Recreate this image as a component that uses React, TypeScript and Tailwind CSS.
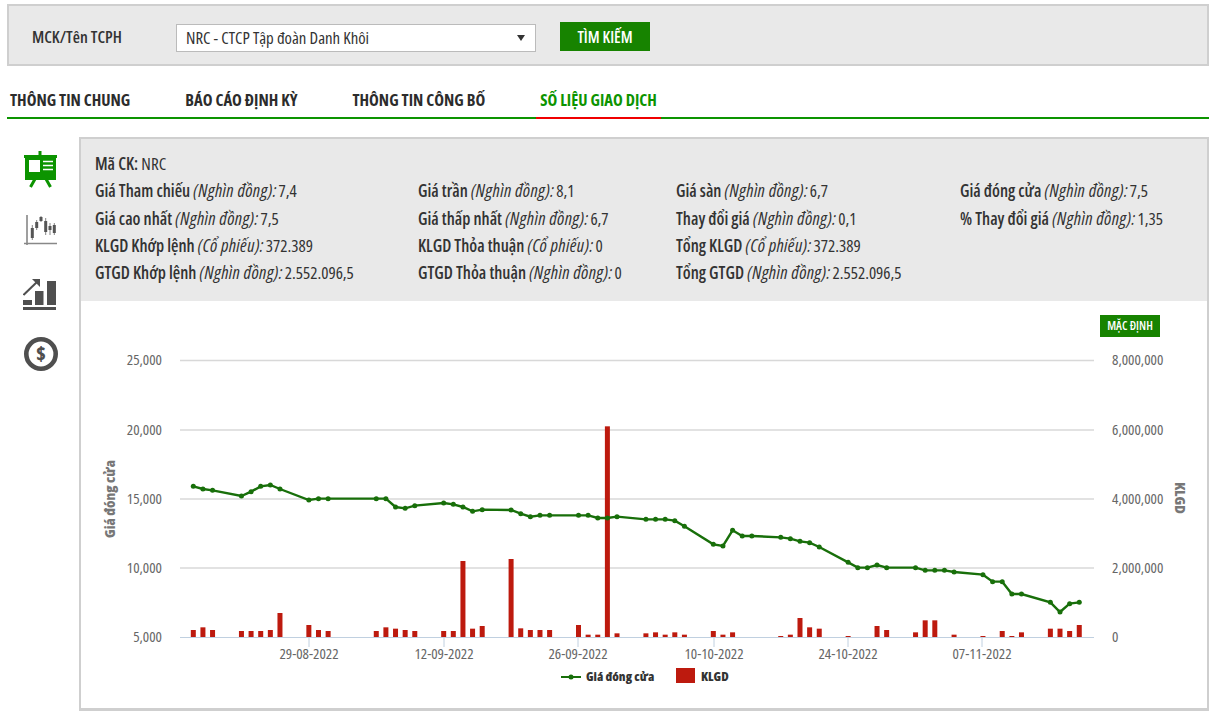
const pts: [number, number][] = [
  [0,79],[1,87],[2,91],[5,108],[6,95],[7,79],[8,75],[9,87],[12,120],[13,116],[14,116],[19,116],[20,116],[21,141],[22,145],[23,137],[26,129],[27,133],[28,141],[29,154],[30,149],
  [33,150],[34,161],[35,170],[36,166],[37,166],[40,166],[41,166],[42,174],[43,174],[44,170],[47,178],[48,178],[49,178],[50,182],[51,199],[54,253],[55,258],[56,211],[57,228],[58,228],[61,232],[62,236],[63,244],[64,248],[65,261],[68,307],
  [69,323],[70,323],[71,315],[72,323],[75,323],[76,331],[77,331],[78,331],[79,336],[82,344],[83,365],[84,365],[85,402],[86,402],[89,427],[90,456],[91,431],[92,427],
];
const bars: [number, number][] = [
  [0,510],[1,502],[2,510],[5,513],[6,513],[7,513],[8,510],[9,459],[12,495],[13,510],[14,513],[19,513],[20,502],[21,506],[22,510],[23,513],[26,513],[27,513],[28,303],[29,506],[30,498],
  [33,297],[34,505],[35,510],[36,510],[37,510],[40,495],[41,524],[42,524],[43,-101],[44,520],[47,520],[48,517],[49,524],[50,517],[51,524],[54,513],[55,524],[56,517],[61,528],[62,524],[63,474],[64,502],[65,506],[68,528],
  [71,498],[72,510],[75,517],[76,481],[77,481],[79,524],[82,528],[84,513],[85,528],[86,517],[89,506],[90,506],[91,513],[92,495],
];
const X = (i: number) => 193.3 + 9.63 * i;
const Y = (z: number) => 460 + z / 3;
const grid = [360.5, 430, 499, 568];
const left = [["25,000", 360], ["20,000", 430], ["15,000", 499], ["10,000", 568], ["5,000", 637]] as const;
const right = [["8,000,000", 360], ["6,000,000", 430], ["4,000,000", 499], ["2,000,000", 568], ["0", 637]] as const;
const dates = [["29-08-2022", 309], ["12-09-2022", 444], ["26-09-2022", 578], ["10-10-2022", 714], ["24-10-2022", 848], ["07-11-2022", 982]] as const;

type Cell = [string, string, string];
const P = "(Nghìn đồng):";
const C = "(Cổ phiếu):";
const E: Cell = ["", "", ""];
const rows: Cell[][] = [
  [["Giá Tham chiếu", P, "7,4"], ["Giá trần", P, "8,1"], ["Giá sàn", P, "6,7"], ["Giá đóng cửa", P, "7,5"]],
  [["Giá cao nhất", P, "7,5"], ["Giá thấp nhất", P, "6,7"], ["Thay đổi giá", P, "0,1"], ["% Thay đổi giá", P, "1,35"]],
  [["KLGD Khớp lệnh", C, "372.389"], ["KLGD Thỏa thuận", C, "0"], ["Tổng KLGD", C, "372.389"], E],
  [["GTGD Khớp lệnh", P, "2.552.096,5"], ["GTGD Thỏa thuận", P, "0"], ["Tổng GTGD", P, "2.552.096,5"], E],
];
const tabs = ["THÔNG TIN CHUNG", "BÁO CÁO ĐỊNH KỲ", "THÔNG TIN CÔNG BỐ", "SỐ LIỆU GIAO DỊCH"];

function BoardIcon() {
  return (
    <svg width="36" height="38" viewBox="0 0 36 38" fill="none">
      <rect x="2" y="5" width="31" height="24" fill="#0c9400" />
      <rect x="1" y="4" width="33" height="3" fill="#0c9400" />
      <rect x="15.5" y="0" width="3" height="5" fill="#0c9400" />
      <rect x="6" y="9" width="11" height="12" fill="#fff" />
      <path d="M20 10.5h10M20 14.5h10M20 18.5h10" stroke="#fff" strokeWidth="1.6" />
      <path d="M12 28 7.5 36M23 28l4.500 8" stroke="#0c9400" strokeWidth="3" />
    </svg>
  );
}
function CandleIcon() {
  return (
    <svg width="36" height="34" viewBox="0 0 36 34" fill="none">
      <path d="M4 2v30M1 30.500h33" stroke="#888" strokeWidth="1.600" />
      <path d="M9.300 12v15M13.700 7v10M18 3v6M22.700 5v17M27 10v12M31.300 10v12" stroke="#777" strokeWidth="0.900" />
      <g fill="#555">
        <rect x="7.800" y="15" width="3" height="10" />
        <rect x="12.200" y="9" width="3" height="6" />
        <rect x="16.500" y="4" width="3" height="4" />
        <rect x="21.200" y="8" width="3" height="11" />
        <rect x="25.500" y="13" width="3" height="4" />
        <rect x="29.800" y="12" width="3" height="8" />
      </g>
    </svg>
  );
}
function GrowthIcon() {
  return (
    <svg width="34" height="33" viewBox="0 0 34 33" fill="none">
      <g fill="#4f4f4f">
        <rect x="0" y="22" width="9" height="5" />
        <rect x="12" y="13" width="8.500" height="14" />
        <rect x="24" y="3" width="9" height="24" />
        <rect x="0" y="29" width="33" height="3" />
      </g>
      <path d="M0.500 17 15 3" stroke="#4f4f4f" strokeWidth="2" />
      <path d="M9 1h8v8z" fill="#4f4f4f" />
    </svg>
  );
}
function DollarIcon() {
  return (
    <svg width="36" height="36" viewBox="0 0 36 36" fill="none">
      <circle cx="18" cy="18" r="14.700" stroke="#4f4f4f" strokeWidth="4.600" />
      <text x="18" y="25" textAnchor="middle" fontSize="20" fontWeight="800" fill="#4f4f4f">$</text>
    </svg>
  );
}

export default function App() {
  return (
    <div className="w-[1230px] h-[711px] overflow-hidden bg-white font-['Open_Sans','Liberation_Sans',sans-serif] font-stretch-condensed text-[#333]">
      <div className="ml-[7px] mt-[4px] w-[1202px] h-[62px] bg-[#e9e9e9] border-2 border-[#cfcfcf] flex items-center">
        <div className="w-[167px] pl-[23px] pt-[4px] text-[16.500px] font-semibold text-[#333] leading-none">MCK/Tên TCPH</div>
        <div className="mt-[6px] w-[360px] h-[28px] bg-white border border-[#bbb] flex items-center justify-between pl-[9px] pr-[10px] text-[16.800px] font-medium">
          <span>NRC - CTCP Tập đoàn Danh Khôi</span>
          <svg width="8" height="6" viewBox="0 0 8 6"><path d="M0 0h8L4 6z" fill="#333" /></svg>
        </div>
        <div className="ml-[24px] mt-[3px] w-[90px] h-[29px] bg-[#178300] text-[#fff] text-[16px] font-semibold flex items-center justify-center">TÌM KIẾM</div>
      </div>

      <div className="ml-[7px] mt-[18px] w-[1202px] h-[35px] border-b-2 border-[#0c9400] flex gap-[49px]">
        {tabs.map((t, i) => (
          <div key={t} className={i === 3
            ? "-mx-[1px] px-[4px] h-[35px] border-b-2 border-[#f00000] text-[#0c9400] text-[16.500px] font-bold leading-[32px]"
            : "px-[3px] h-[35px] text-[#2c2c2c] text-[16.500px] font-bold leading-[32px]"}>{t}</div>
        ))}
      </div>

      <div className="flex ml-[7px] mt-[18px]">
        <div className="w-[72px] flex flex-col items-start pl-[16px] pt-[14px]">
          <BoardIcon />
          <div className="mt-[24px]"><CandleIcon /></div>
          <div className="mt-[31px]"><GrowthIcon /></div>
          <div className="mt-[25px]"><DollarIcon /></div>
        </div>
        <div className="w-[1130px] h-[574px] border-2 border-[#cfcfcf] border-b-[3px]">
          <div className="h-[162px] bg-[#e9e9e9] pl-[14px] pt-[11px] text-[17px] leading-[27.300px]">
            <div><b className="font-semibold">Mã CK:</b> <span>NRC</span></div>
            <div className="grid grid-cols-[323px_258px_284px_1fr]">
              {rows.flat().map((c, i) => (
                <div key={i} className="whitespace-nowrap h-[27.300px]">
                  <b className="font-semibold">{c[0]}</b> <i className="font-normal text-[18px] tracking-[0.350px]">{c[1]}</i><span className="ml-[2px]">{c[2]}</span>
                </div>
              ))}
            </div>
          </div>
          <div className="relative h-[409px]">
            <div className="absolute top-[14px] right-[47px] w-[60px] h-[22px] bg-[#178300] text-[#fff] text-[12px] font-semibold flex items-center justify-center">MẶC ĐỊNH</div>
            <svg className="block" width="1126" height="409" viewBox="81 301 1126 409">
              {grid.map((y) => <path key={y} d={`M180 ${y}H1094`} stroke="#d8d8d8" strokeWidth="1.500" />)}
              <path d="M180 637.500H1094" stroke="#c0d0e0" strokeWidth="1.200" />
              {dates.map(([, x]) => <path key={x} d={`M${x} 637V647`} stroke="#c0d0e0" strokeWidth="1" />)}
              {bars.map(([i, z]) => {
                const top = Y(z);
                return <rect key={i} x={X(i) - 2.5} y={top} width="5" height={637 - top} fill="#bd1a0e" />;
              })}
              <polyline points={pts.map(([i, z]) => `${X(i)},${Y(z)}`).join(" ")} fill="none" stroke="#186f0a" strokeWidth="2.400" />
              {pts.map(([i, z]) => <circle key={i} cx={X(i)} cy={Y(z)} r="2.500" fill="#186f0a" />)}
              <g fontSize="15" fill="#666">
                {left.map(([t, y]) => <text key={t} x="162" y={y + 5} textAnchor="end">{t}</text>)}
                {right.map(([t, y]) => <text key={t} x="1112" y={y + 5}>{t}</text>)}
                {dates.map(([t, x]) => <text key={t} x={x} y="659" textAnchor="middle">{t}</text>)}
              </g>
              <g fontSize="14.600" fontWeight="800" fill="#777">
                <text transform="translate(115 499) rotate(-90)" textAnchor="middle">Giá đóng cửa</text>
                <text transform="translate(1175 498) rotate(90)" textAnchor="middle">KLGD</text>
              </g>
              <path d="M561 677H581" stroke="#186f0a" strokeWidth="2" />
              <circle cx="571" cy="677" r="2.500" fill="#186f0a" />
              <rect x="676" y="668" width="19" height="15" fill="#bd1a0e" />
              <g fontSize="12.800" fontWeight="800" fill="#333">
                <text x="586" y="681">Giá đóng cửa</text>
                <text x="701" y="681">KLGD</text>
              </g>
            </svg>
          </div>
        </div>
      </div>
    </div>
  );
}
